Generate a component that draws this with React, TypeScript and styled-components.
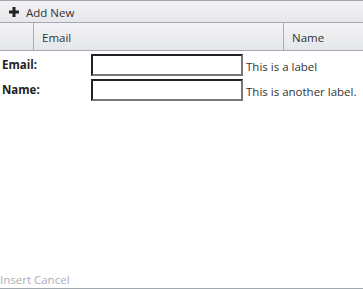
import React from 'react';
import styled, { createGlobalStyle } from 'styled-components';

const GlobalStyle = createGlobalStyle`
    html, body {
        margin: 0;
        padding: 0;
        background: #ffffff;
    }
    body {
        font-family: "Open Sans", "Noto Sans", sans-serif;
        font-size: 11.5px;
    }
`;

const Grid = styled.div`
    display: flex;
    flex-direction: column;
    width: 363px;
    height: 289px;
    box-sizing: border-box;
    border-top: 1px solid #a3a7ae;
    border-bottom: 1px solid #a3a7ae;
    color: #333333;
`;

const Toolbar = styled.div`
    display: flex;
    align-items: center;
    height: 21px;
    padding-left: 9px;
    background: linear-gradient(#f2f2f4, #e7e8eb);
    border-bottom: 1px solid #a3a7ae;
`;

const ToolButton = styled.span`
    display: flex;
    align-items: center;
    gap: 7px;
    padding-top: 3px;
    color: #333333;
    line-height: 1;

    svg {
        margin-top: -2px;
    }
`;

const HeaderRow = styled.div`
    display: grid;
    grid-template-columns: 33px 250px 1fr;
    height: 27px;
    background: linear-gradient(#f3f3f5, #e6e7ea);
    border-bottom: 1px solid #a3a7ae;
`;

const HeaderCell = styled.div<{ $divider?: boolean }>`
    display: flex;
    align-items: center;
    padding-left: 8px;
    padding-top: 2px;
    border-left: ${p => (p.$divider ? '1px solid #a9adb3' : 'none')};
    color: #333333;
`;

const Form = styled.div`
    flex: 1;
    display: grid;
    grid-template-columns: 91px auto 1fr;
    grid-auto-rows: 22px;
    row-gap: 3px;
    align-content: start;
    padding-top: 3px;
`;

const FieldLabel = styled.label`
    padding-left: 2px;
    padding-top: 3px;
    font-weight: bold;
    color: #222222;
    line-height: 16px;
`;

const TextBox = styled.input`
    width: 152px;
    height: 22px;
    box-sizing: border-box;
    margin: 0;
    padding: 0 3px;
    border: 2px solid;
    border-color: #222222 #777777 #777777 #222222;
    background: #ffffff;
    outline: none;
    font: inherit;
`;

const Hint = styled.span`
    display: flex;
    align-items: center;
    padding-left: 3px;
    padding-top: 2px;
    color: #333333;
`;

const Footer = styled.div`
    color: #a9b0bd;
    line-height: 16px;
`;

const PlusIcon = () => (
    <svg width="10" height="10" viewBox="0 0 10 10">
        <path d="M3.5 0h3v3.5H10v3H6.5V10h-3V6.5H0v-3h3.5z" fill="#222222" />
    </svg>
);

const fields = [
    { label: 'Email:', hint: 'This is a label' },
    { label: 'Name:', hint: 'This is another label.' },
];

const App = () => (
    <>
        <GlobalStyle />
        <Grid>
            <Toolbar>
                <ToolButton>
                    <PlusIcon />
                    Add New
                </ToolButton>
            </Toolbar>
            <HeaderRow>
                <HeaderCell />
                <HeaderCell $divider>Email</HeaderCell>
                <HeaderCell $divider>Name</HeaderCell>
            </HeaderRow>
            <Form>
                {fields.map(f => (
                    <React.Fragment key={f.label}>
                        <FieldLabel>{f.label}</FieldLabel>
                        <TextBox type="text" />
                        <Hint>{f.hint}</Hint>
                    </React.Fragment>
                ))}
            </Form>
            <Footer>Insert Cancel</Footer>
        </Grid>
    </>
);

export default App;
